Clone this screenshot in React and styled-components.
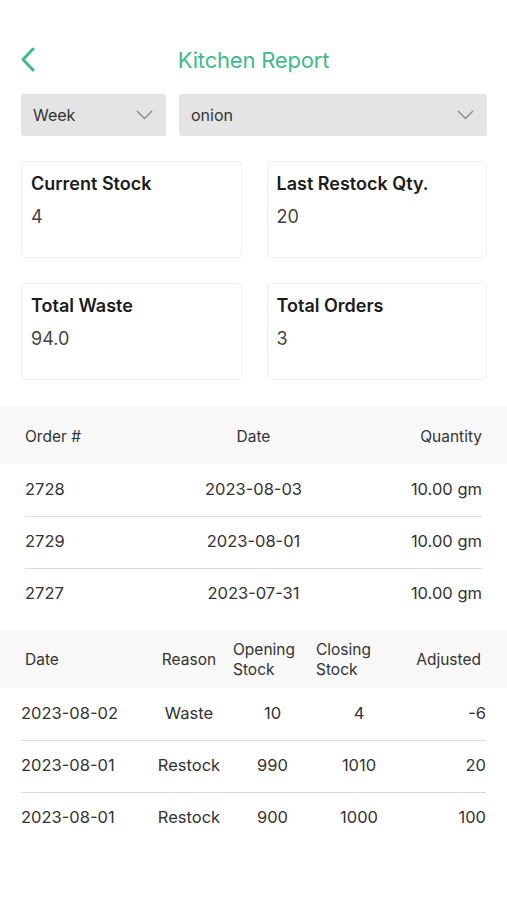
import React from "react";
import styled, { createGlobalStyle } from "styled-components";

const GlobalStyle = createGlobalStyle`
  body {
    margin: 0;
    background: #ffffff;
    font-family: Inter, "Noto Sans", sans-serif;
    color: #333333;
  }
`;

const Page = styled.div`
  padding-top: 38px;
  padding-bottom: 40px;
`;

const Header = styled.header`
  position: relative;
  height: 44px;
  display: flex;
  align-items: center;
  justify-content: center;
`;

const BackButton = styled.button`
  position: absolute;
  left: 14px;
  top: 8px;
  width: 28px;
  height: 28px;
  padding: 0;
  border: none;
  background: none;
  display: flex;
  align-items: center;
  justify-content: center;
`;

const Title = styled.h1`
  margin: 0;
  font-size: 22px;
  font-weight: 400;
  color: #3dbb8b;
  letter-spacing: -0.2px;
`;

const Content = styled.div`
  padding: 0 20px 0 21px;
`;

const Filters = styled.div`
  margin-top: 12px;
  display: grid;
  grid-template-columns: 145px 1fr;
  gap: 13px;
`;

const Select = styled.div`
  height: 42px;
  border-radius: 3px;
  background: #e4e4e4;
  display: flex;
  align-items: center;
  justify-content: space-between;
  padding: 0 13px 0 12px;
  font-size: 16px;
  color: #333;
`;

const Cards = styled.div`
  margin-top: 25px;
  display: grid;
  grid-template-columns: 1fr 1fr;
  gap: 25px;
`;

const Card = styled.div`
  height: 97px;
  box-sizing: border-box;
  border: 1px solid #f1f1f1;
  border-radius: 4px;
  padding: 11px 9px;
`;

const CardLabel = styled.div`
  font-size: 18px;
  font-weight: 600;
  color: #1c1c1c;
  line-height: 22px;
`;

const CardValue = styled.div`
  margin-top: 11px;
  font-size: 18px;
  color: #424242;
  line-height: 22px;
`;

const Table = styled.div`
  margin-top: ${(p) => p.$top}px;
`;

const HeadRow = styled.div`
  background: #f8f8f8;
  height: 58px;
  box-sizing: border-box;
  padding: ${(p) => p.$pad};
  display: grid;
  grid-template-columns: ${(p) => p.$cols};
  align-items: center;
  font-size: 15.5px;
  color: #333;
  line-height: 20px;
`;

const Body = styled.div`
  padding: ${(p) => p.$pad};
`;

const Row = styled.div`
  height: 52px;
  box-sizing: border-box;
  padding-bottom: 3px;
  display: grid;
  grid-template-columns: ${(p) => p.$cols};
  align-items: center;
  font-size: 16.5px;
  color: #333;
  & + & {
    border-top: 1px solid #dcdcdc;
  }
`;

const Cell = styled.div`
  text-align: ${(p) => p.$align || "left"};
  padding: ${(p) => p.$pad || "0"};
`;

const Chevron = () => (
  <svg width="17" height="10" viewBox="0 0 17 10" fill="none">
    <path d="M1 1l7.5 7.5L16 1" stroke="#8a8a8a" strokeWidth="1.4" />
  </svg>
);

const BackIcon = () => (
  <svg width="16" height="26" viewBox="0 0 16 26" fill="none">
    <path
      d="M13 2L3 12.5 13 23"
      stroke="#3dbb8b"
      strokeWidth="3"
      strokeLinecap="round"
      strokeLinejoin="round"
    />
  </svg>
);

const stats = [
  { label: "Current Stock", value: "4" },
  { label: "Last Restock Qty.", value: "20" },
  { label: "Total Waste", value: "94.0" },
  { label: "Total Orders", value: "3" },
];

const orders = [
  ["2728", "2023-08-03", "10.00 gm"],
  ["2729", "2023-08-01", "10.00 gm"],
  ["2727", "2023-07-31", "10.00 gm"],
];

const adjustments = [
  ["2023-08-02", "Waste", "10", "4", "-6"],
  ["2023-08-01", "Restock", "990", "1010", "20"],
  ["2023-08-01", "Restock", "900", "1000", "100"],
];

const orderCols = "1fr 1fr 1fr";
const adjCols = "124px 88px 79px 94px 1fr";

export default function App() {
  return (
    <Page>
      <GlobalStyle />
      <Header>
        <BackButton>
          <BackIcon />
        </BackButton>
        <Title>Kitchen Report</Title>
      </Header>

      <Content>
        <Filters>
          <Select>
            Week
            <Chevron />
          </Select>
          <Select>
            onion
            <Chevron />
          </Select>
        </Filters>

        <Cards>
          {stats.map((s) => (
            <Card key={s.label}>
              <CardLabel>{s.label}</CardLabel>
              <CardValue>{s.value}</CardValue>
            </Card>
          ))}
        </Cards>
      </Content>

      <Table $top={26}>
        <HeadRow $cols={orderCols} $pad="3px 25px 0">
          <Cell>Order #</Cell>
          <Cell $align="center">Date</Cell>
          <Cell $align="right">Quantity</Cell>
        </HeadRow>
        <Body $pad="0 25px">
          {orders.map((o) => (
            <Row key={o[0]} $cols={orderCols}>
              <Cell>{o[0]}</Cell>
              <Cell $align="center">{o[1]}</Cell>
              <Cell $align="right">{o[2]}</Cell>
            </Row>
          ))}
        </Body>
      </Table>

      <Table $top={10}>
        <HeadRow $cols={adjCols} $pad="1px 21px 0">
          <Cell $pad="0 0 0 4px">Date</Cell>
          <Cell $align="center">Reason</Cell>
          <Cell>
            Opening
            <br />
            Stock
          </Cell>
          <Cell $pad="0 0 0 4px">
            Closing
            <br />
            Stock
          </Cell>
          <Cell $align="right" $pad="0 5px 0 0">
            Adjusted
          </Cell>
        </HeadRow>
        <Body $pad="0 21px">
          {adjustments.map((a, i) => (
            <Row key={i} $cols={adjCols}>
              <Cell>{a[0]}</Cell>
              <Cell $align="center">{a[1]}</Cell>
              <Cell $align="center">{a[2]}</Cell>
              <Cell $align="center">{a[3]}</Cell>
              <Cell $align="right">{a[4]}</Cell>
            </Row>
          ))}
        </Body>
      </Table>
    </Page>
  );
}
